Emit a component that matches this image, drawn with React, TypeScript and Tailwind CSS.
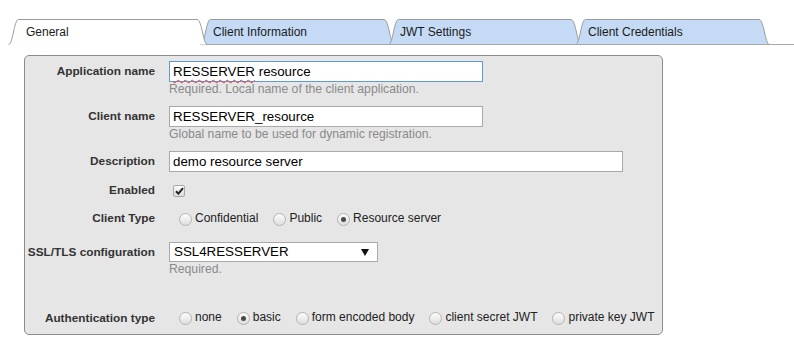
import React from 'react';

type Tab = { label: string; width: number; textPad: number; active?: boolean };

const tabs: Tab[] = [
    { label: 'General', width: 200, textPad: 18, active: true },
    { label: 'Client Information', width: 195, textPad: 13 },
    { label: 'JWT Settings', width: 194, textPad: 12 },
    { label: 'Client Credentials', width: 195, textPad: 13 },
];

function TabShape({ width, active }: { width: number; active?: boolean }) {
    const w = width;
    const outline = `M0.5,25.5 C5,25.5 6,0.5 10.5,0.5 L${w - 11},0.5 C${w - 6},0.5 ${w - 5},25.5 ${w - 0.5},25.5`;
    return (
        <svg className="absolute inset-0" width={w} height={26} viewBox={`0 0 ${w} 26`}>
            <path d={outline + (active ? '' : ' Z')} fill={active ? '#ffffff' : '#c5dbf5'} stroke="none" />
            <path d={outline} fill="none" stroke="#9a9a9a" strokeWidth={1} />
            {!active && <line x1={0} y1={25.5} x2={w} y2={25.5} stroke="#a8a8a8" strokeWidth={1} />}
        </svg>
    );
}

function Radio({ checked }: { checked?: boolean }) {
    return (
        <span className="relative flex items-center justify-center w-[13px] h-[13px] rounded-full border border-[#b4b4b4] bg-gradient-to-b from-[#fdfdfd] to-[#dedede] shrink-0">
            {checked && <span className="w-[5px] h-[5px] rounded-full bg-[#4a4a4a]" />}
        </span>
    );
}

function RadioOption({ label, checked, first }: { label: string; checked?: boolean; first?: boolean }) {
    return (
        <div className={`flex items-center shrink-0 whitespace-nowrap mr-[15px] ${first ? 'ml-[10px]' : ''}`}>
            <Radio checked={checked} />
            <span className="ml-[3px] -mt-[3px] text-[12px] text-[#222]">{label}</span>
        </div>
    );
}

function Label({ children }: { children: React.ReactNode }) {
    return (
        <div className="w-[130px] mr-[14px] text-right text-[11.8px] font-bold text-[#333] shrink-0 whitespace-nowrap">{children}</div>
    );
}

function TextBox({ width, focused, children }: { width: number; focused?: boolean; children: React.ReactNode }) {
    return (
        <div
            className={`h-[21px] bg-white border pl-[3px] text-[13.33px] leading-[19px] text-black whitespace-nowrap ${focused ? 'border-[#5c9ad8]' : 'border-[#a9a9a9]'}`}
            style={{ width }}
        >
            {children}
        </div>
    );
}

function Help({ children }: { children: React.ReactNode }) {
    return <div className="text-[12.2px] leading-[14px] text-[#8a8a8a] whitespace-nowrap">{children}</div>;
}

export default function App() {
    return (
        <div className="w-[794px] h-[348px] bg-white overflow-hidden font-['Liberation_Sans',Arial,sans-serif]">
            <div className="flex pl-[8px] mt-[19px]">
                {tabs.map((tab, i) => (
                    <div
                        key={tab.label}
                        className={`relative h-[26px] shrink-0 ${i > 0 ? (i === 1 ? '-ml-[8px]' : '-ml-[7px]') : ''} ${tab.active ? 'z-10' : ''}`}
                        style={{ width: tab.width }}
                    >
                        <TabShape width={tab.width} active={tab.active} />
                        <span className="relative block text-[12px] leading-[26px] text-[#1a1a1a]" style={{ paddingLeft: tab.textPad }}>
                            {tab.label}
                        </span>
                    </div>
                ))}
                <div className="flex-1 h-[26px] border-b border-[#a8a8a8]" />
            </div>

            <div className="ml-[24px] mt-[10px] w-[639px] h-[280px] bg-[#e6e6e6] border border-[#8c8c8c] rounded-[5px] pt-[5px]">
                <div className="flex items-start">
                    <Label><div className="leading-[21px]">Application name</div></Label>
                    <div>
                        <TextBox width={314} focused>
                            <span className="underline decoration-wavy decoration-[#e04040] decoration-1 underline-offset-[3px]">RESSERVER</span> resource
                        </TextBox>
                        <Help>Required. Local name of the client application.</Help>
                    </div>
                </div>

                <div className="flex items-start mt-[10px]">
                    <Label><div className="leading-[21px]">Client name</div></Label>
                    <div>
                        <TextBox width={314}>RESSERVER_resource</TextBox>
                        <Help>Global name to be used for dynamic registration.</Help>
                    </div>
                </div>

                <div className="flex items-center mt-[10px]">
                    <Label><div className="leading-[21px]">Description</div></Label>
                    <TextBox width={454}>demo resource server</TextBox>
                </div>

                <div className="flex items-center h-[20px] mt-[9px]">
                    <Label>Enabled</Label>
                    <span className="ml-[4px] w-[12px] h-[12px] border border-[#a8a8a8] rounded-[2px] bg-gradient-to-b from-[#fbfbfb] to-[#dcdcdc] flex items-center justify-center">
                        <svg width="9" height="8" viewBox="0 0 9 8">
                            <path d="M1 4.2 L3.4 6.6 L8 1.2" fill="none" stroke="#222" strokeWidth="2" />
                        </svg>
                    </span>
                </div>

                <div className="flex items-center h-[20px] mt-[8px]">
                    <Label>Client Type</Label>
                    <RadioOption label="Confidential" first />
                    <RadioOption label="Public" />
                    <RadioOption label="Resource server" checked />
                </div>

                <div className="flex items-start mt-[13px]">
                    <Label><div className="leading-[20px]">SSL/TLS configuration</div></Label>
                    <div>
                        <div className="w-[209px] h-[20px] bg-white border border-[#a9a9a9] pl-[4px] pr-[8px] flex items-center justify-between text-[13.33px] text-black">
                            <span>SSL4RESSERVER</span>
                            <svg width="8" height="7" viewBox="0 0 8 7">
                                <path d="M0 0 L8 0 L4 7 Z" fill="#111" />
                            </svg>
                        </div>
                        <Help>Required.</Help>
                    </div>
                </div>

                <div className="flex items-center h-[20px] mt-[32px]">
                    <Label><div className="pt-[2px]">Authentication type</div></Label>
                    <RadioOption label="none" first />
                    <RadioOption label="basic" checked />
                    <RadioOption label="form encoded body" />
                    <RadioOption label="client secret JWT" />
                    <RadioOption label="private key JWT" />
                </div>
            </div>
        </div>
    );
}
